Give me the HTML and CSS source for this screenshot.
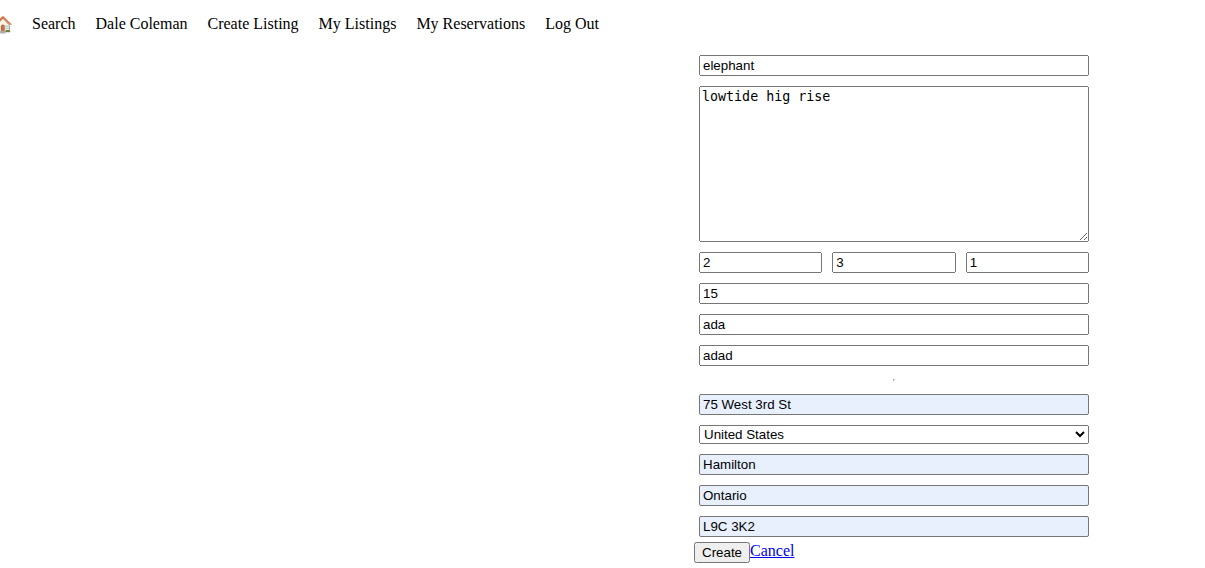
FILE: index.html
```html
<!DOCTYPE html>
<html lang="en">
<head>
<meta charset="utf-8">
<title>Create Listing</title>
<link rel="stylesheet" href="styles.css">
</head>
<body>
<nav class="nav">
<a class="home" aria-label="Home">🏠</a>
<a>Search</a><a>Dale Coleman</a><a>Create Listing</a><a>My Listings</a><a>My Reservations</a><a>Log Out</a>
</nav>
<form class="form">
<input class="field" value="elephant">
<textarea class="field area">lowtide hig rise</textarea>
<div class="row"><input class="field" value="2"><input class="field" value="3"><input class="field" value="1"></div>
<input class="field" value="15">
<input class="field" value="ada">
<input class="field" value="adad">
<hr class="rule">
<input class="field filled" value="75 West 3rd St">
<select class="field country"><option>United States</option></select>
<input class="field filled" value="Hamilton">
<input class="field filled" value="Ontario">
<input class="field filled" value="L9C 3K2">
<div class="actions"><button type="button">Create</button><a href="#">Cancel</a></div>
</form>
</body>
</html>
```
FILE: styles.css
```css
body { margin: 0; overflow: hidden; font-family: "Liberation Serif", serif; font-size: 16px; }
.nav { display: flex; gap: 20px; height: 50px; padding-top: 15px; box-sizing: border-box; margin-left: -7px; line-height: 18px; }
.home { width: 19px; height: 18px; padding-top: 1px; }
.form { width: 400px; margin-left: 694px; display: flex; flex-direction: column; }
.field { box-sizing: border-box; margin: 5px; }
input.field { height: 21px; min-width: 0; }
.area { height: 156px; }
.row { display: flex; }
.row .field { flex: 1 1 0; }
.rule { margin: 8px auto; }
.filled { background: #e8f0fe; border: 1px solid #767676; border-radius: 2px; padding: 2px 3px; }
.country { height: 19px; }
.actions { display: flex; align-items: flex-start; line-height: 18px; }
```
